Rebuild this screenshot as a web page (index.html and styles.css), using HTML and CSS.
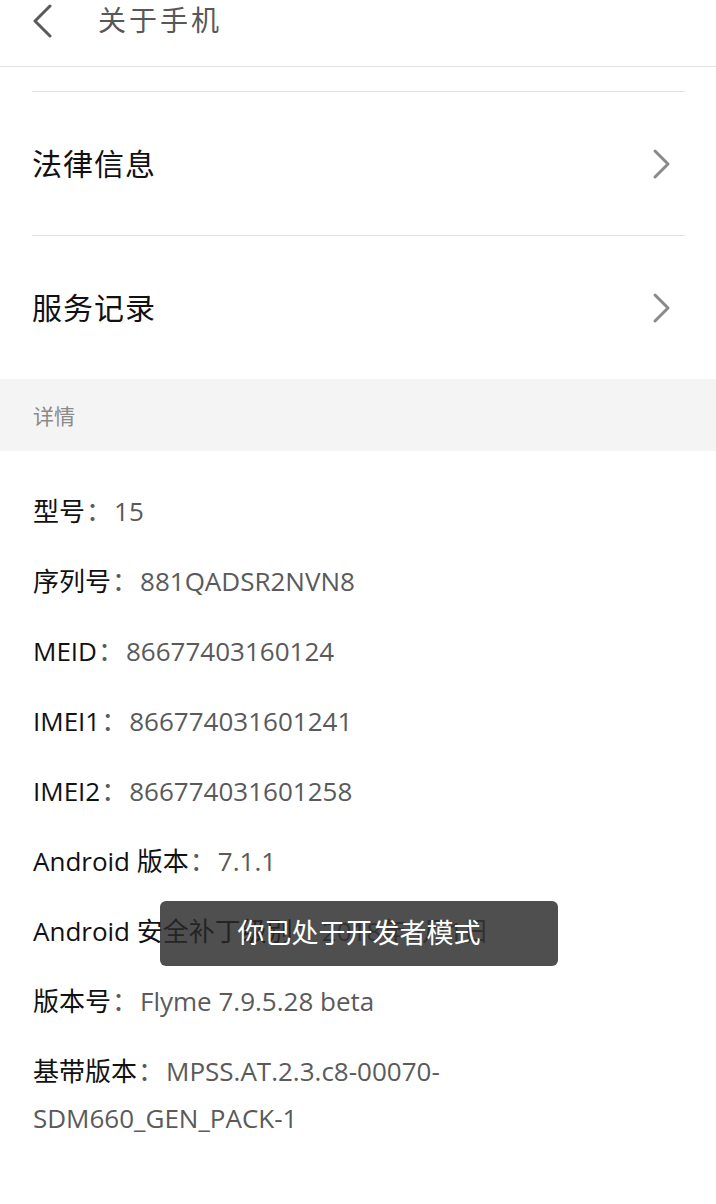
FILE: index.html
```html
<!DOCTYPE html>
<html lang="zh-CN">
<head>
<meta charset="utf-8">
<title>关于手机</title>
<link rel="stylesheet" href="styles.css">
</head>
<body>
<div class="page">
  <header class="header">
    <svg class="back" width="24" height="34" viewBox="0 0 24 34">
      <polyline points="19,2 4,17 19,32" fill="none" stroke="#5a5a5a" stroke-width="3" stroke-linecap="round" stroke-linejoin="round"/>
    </svg>
    <div class="title">关于手机</div>
  </header>

  <div class="menu">
    <div class="menu-row">
      <span class="menu-label">法律信息</span>
      <svg class="chev" width="20" height="32" viewBox="0 0 20 32">
        <polyline points="4,3 17,16 4,29" fill="none" stroke="#8a8a8a" stroke-width="3" stroke-linecap="round" stroke-linejoin="round"/>
      </svg>
    </div>
    <div class="menu-row">
      <span class="menu-label">服务记录</span>
      <svg class="chev" width="20" height="32" viewBox="0 0 20 32">
        <polyline points="4,3 17,16 4,29" fill="none" stroke="#8a8a8a" stroke-width="3" stroke-linecap="round" stroke-linejoin="round"/>
      </svg>
    </div>
  </div>

  <div class="section">详情</div>

  <div class="details">
    <div class="item"><span class="k">型号</span><span class="c">：</span><span class="v">15</span></div>
    <div class="item"><span class="k">序列号</span><span class="c">：</span><span class="v">881QADSR2NVN8</span></div>
    <div class="item"><span class="k">MEID</span><span class="c">：</span><span class="v">86677403160124</span></div>
    <div class="item"><span class="k">IMEI1</span><span class="c">：</span><span class="v">866774031601241</span></div>
    <div class="item"><span class="k">IMEI2</span><span class="c">：</span><span class="v">866774031601258</span></div>
    <div class="item"><span class="k">Android 版本</span><span class="c">：</span><span class="v">7.1.1</span></div>
    <div class="item"><span class="k">Android 安全补丁级别</span><span class="c">：</span><span class="v">2018年5月1日</span></div>
    <div class="item"><span class="k">版本号</span><span class="c">：</span><span class="v">Flyme 7.9.5.28 beta</span></div>
    <div class="item"><span class="k">基带版本</span><span class="c">：</span><span class="v">MPSS.AT.2.3.c8-00070-SDM660_GEN_PACK-1</span></div>
  </div>

  <div class="toast">你已处于开发者模式</div>
</div>
</body>
</html>
```

FILE: styles.css
```css
html, body {
  margin: 0;
  padding: 0;
  background: #ffffff;
}

.page {
  position: relative;
  width: 716px;
  height: 1204px;
  overflow: hidden;
  font-family: "Open Sans", "Noto Sans CJK SC", sans-serif;
}

.header {
  height: 67px;
  box-sizing: border-box;
  border-bottom: 1px solid #e3e3e3;
  display: flex;
  align-items: flex-start;
  padding-top: 3px;
}

.back {
  margin-left: 31px;
  margin-top: 1px;
}

.title {
  margin-left: 43px;
  font-family: "Noto Sans CJK SC", sans-serif;
  font-size: 28px;
  line-height: 32px;
  letter-spacing: 3px;
  color: #585858;
}

.menu {
  margin: 24px 31px 0 32px;
}

.menu-row {
  height: 143px;
  border-top: 1px solid #e3e3e3;
  display: flex;
  align-items: center;
  justify-content: space-between;
}

.menu-label {
  font-family: "Noto Sans CJK SC", sans-serif;
  font-size: 30px;
  line-height: 36px;
  letter-spacing: 1px;
  color: #111111;
  margin-bottom: 4px;
}

.chev {
  margin-right: 14px;
}

.section {
  height: 72px;
  background: #f4f4f4;
  box-sizing: border-box;
  padding-left: 33px;
  display: flex;
  align-items: center;
  font-family: "Noto Sans CJK SC", sans-serif;
  font-size: 21px;
  color: #8a8a8a;
}

.details {
  padding: 25.5px 60px 0 33px;
}

.item {
  padding: 11.5px 0;
  font-size: 26px;
  line-height: 47px;
}

.k {
  color: #111111;
}

.c {
  color: #5a5a5a;
  margin: 0 2px 0 1px;
}

.v {
  color: #5a5a5a;
}

.toast {
  position: absolute;
  left: 160px;
  top: 901px;
  width: 398px;
  height: 65px;
  box-sizing: border-box;
  padding-bottom: 4px;
  border-radius: 6px;
  background: rgba(40, 40, 40, 0.82);
  color: #ffffff;
  font-family: "Noto Sans CJK SC", sans-serif;
  font-size: 27px;
  display: flex;
  align-items: center;
  justify-content: center;
}
```
